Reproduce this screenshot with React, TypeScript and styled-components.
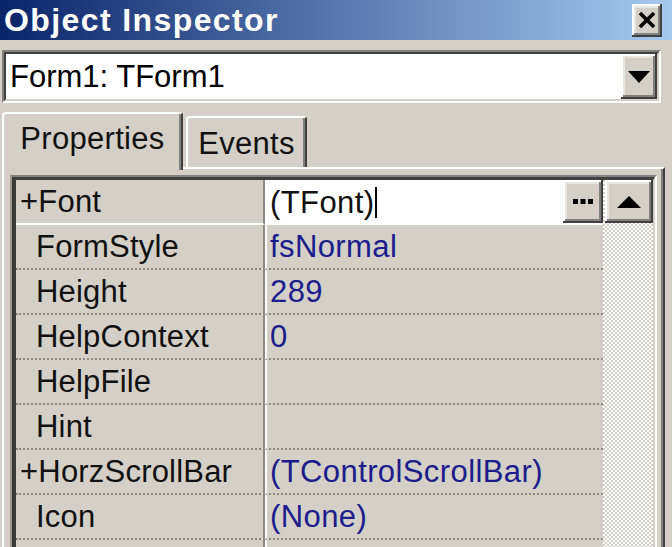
import React from "react";
import styled, { createGlobalStyle } from "styled-components";

const GlobalStyle = createGlobalStyle`
    html, body {
        margin: 0;
        padding: 0;
        background: #d4d0c8;
    }
    body {
        width: 672px;
        height: 547px;
        overflow: hidden;
        font-family: "Liberation Sans", Arial, sans-serif;
    }
`;

const Window = styled.div`
    width: 672px;
    height: 547px;
    display: flex;
    flex-direction: column;
    background: #d4d0c8;
    overflow: hidden;
`;

const TitleBar = styled.div`
    height: 40px;
    flex: none;
    display: flex;
    align-items: center;
    justify-content: space-between;
    padding: 0 10px 0 4px;
    background: linear-gradient(to right, #0a246a 0%, #a6caf0 100%);
`;

const Title = styled.div`
    color: #fff;
    font-weight: bold;
    font-size: 32px;
    letter-spacing: 1.4px;
    line-height: 40px;
`;

const RaisedButton = styled.div`
    background: #d4d0c8;
    display: flex;
    align-items: center;
    justify-content: center;
    box-sizing: border-box;
    box-shadow: inset -2px -2px 0 #404040, inset 2px 2px 0 #ffffff,
        inset -4px -4px 0 #808080, inset 4px 4px 0 #e8e6e0;
`;

const CloseButton = styled(RaisedButton)`
    width: 30px;
    height: 33px;
`;

const ComboOuter = styled.div`
    flex: none;
    height: 53px;
    margin: 10px 11px 0 2px;
    box-sizing: border-box;
    border-top: 2px solid #808080;
    border-left: 2px solid #808080;
    border-bottom: 2px solid #ffffff;
    border-right: 2px solid #ffffff;
    display: flex;
`;

const ComboInner = styled.div`
    flex: 1;
    display: flex;
    background: #fff;
    border-top: 2px solid #404040;
    border-left: 2px solid #404040;
    border-bottom: 2px solid #d4d0c8;
    border-right: 2px solid #d4d0c8;
`;

const ComboText = styled.div`
    flex: 1;
    display: flex;
    align-items: center;
    padding-left: 4px;
    font-size: 31px;
    color: #000;
`;

const DropButton = styled(RaisedButton)`
    width: 36px;
`;

const TabStrip = styled.div`
    flex: none;
    height: 55px;
    margin-top: 9px;
    padding-left: 2px;
    display: flex;
    align-items: flex-start;
    gap: 3px;
    position: relative;
    z-index: 1;
`;

const Tab = styled.div<{ $active?: boolean }>`
    box-sizing: border-box;
    width: ${(p) => (p.$active ? "181px" : "121px")};
    height: ${(p) => (p.$active ? "58px" : "51px")};
    margin-top: ${(p) => (p.$active ? "0" : "4px")};
    background: #d4d0c8;
    border-top: 2px solid #fff;
    border-left: 2px solid #fff;
    border-right: 2px solid #404040;
    border-top-left-radius: 4px;
    border-top-right-radius: 3px;
    box-shadow: inset -2px 0 0 #808080;
    display: flex;
    justify-content: center;
    padding-top: ${(p) => (p.$active ? "7px" : "8px")};
    font-size: 31px;
    letter-spacing: 0.3px;
    line-height: 36px;
    color: #111;
`;

const TabPage = styled.div`
    flex: 1;
    min-height: 0;
    margin: 0 7px 0 2px;
    border-top: 2px solid #fff;
    border-left: 2px solid #fff;
    border-right: 2px solid #404040;
    box-shadow: inset -2px 0 0 #808080;
    padding: 6px 6px 0 6px;
    display: flex;
`;

const GridFrame = styled.div`
    flex: 1;
    display: flex;
    border-top: 2px solid #808080;
    border-left: 2px solid #9a9890;
    border-right: 2px solid #fff;
`;

const GridInner = styled.div`
    flex: 1;
    display: flex;
    border-top: 3px solid #404040;
    border-left: 4px solid #3a3a3a;
    border-right: 2px solid #d4d0c8;
`;

const Rows = styled.div`
    flex: 1;
    display: flex;
    flex-direction: column;
`;

const Row = styled.div`
    flex: none;
    height: 45px;
    display: grid;
    grid-template-columns: 249px 1fr;
`;

const NameCell = styled.div<{ $expandable?: boolean; $selected?: boolean }>`
    display: flex;
    align-items: center;
    box-sizing: border-box;
    padding-left: ${(p) => (p.$expandable ? "4px" : "20px")};
    border-right: 2px solid #8c8a84;
    border-bottom: 2px ${(p) => (p.$selected ? "solid #fff" : "dotted #8a8880")};
    font-size: 31px;
    letter-spacing: 0.2px;
    color: #111;
    white-space: nowrap;
`;

const ValueCell = styled.div<{ $selected?: boolean }>`
    display: flex;
    align-items: center;
    box-sizing: border-box;
    border-left: 2px solid #fff;
    border-bottom: ${(p) => (p.$selected ? "none" : "2px dotted #8a8880")};
    background: ${(p) => (p.$selected ? "#fff" : "transparent")};
    font-size: 31px;
    letter-spacing: 0.4px;
    color: ${(p) => (p.$selected ? "#111" : "#1c1c8c")};
    white-space: nowrap;
    overflow: hidden;
`;

const ValueText = styled.div`
    flex: 1;
    padding-left: 3px;
    display: flex;
    align-items: center;
`;

const Caret = styled.span`
    display: inline-block;
    width: 2px;
    height: 31px;
    background: #000;
    margin-left: 1px;
`;

const EllipsisButton = styled(RaisedButton)`
    width: 40px;
    height: 43px;
    align-self: flex-start;
`;

const ScrollBar = styled.div`
    flex: none;
    width: 50px;
    display: flex;
    flex-direction: column;
    background: repeating-conic-gradient(#ffffff 0 25%, #d4d0c8 0 50%) 0 0 / 4px 4px;
`;

const ScrollButton = styled(RaisedButton)`
    height: 43px;
    margin-left: 2px;
`;

type Prop = { name: string; value: string; expandable?: boolean };

const props: Prop[] = [
    { name: "FormStyle", value: "fsNormal" },
    { name: "Height", value: "289" },
    { name: "HelpContext", value: "0" },
    { name: "HelpFile", value: "" },
    { name: "Hint", value: "" },
    { name: "+HorzScrollBar", value: "(TControlScrollBar)", expandable: true },
    { name: "Icon", value: "(None)" },
    { name: "", value: "" },
];

const App = () => {
    return (
        <Window>
            <GlobalStyle />
            <TitleBar>
                <Title>Object Inspector</Title>
                <CloseButton>
                    <svg width="18" height="16" viewBox="0 0 18 16">
                        <path d="M2 1 L16 15 M16 1 L2 15" stroke="#000" strokeWidth="3.6" />
                    </svg>
                </CloseButton>
            </TitleBar>

            <ComboOuter>
                <ComboInner>
                    <ComboText>Form1: TForm1</ComboText>
                    <DropButton>
                        <svg width="22" height="12" viewBox="0 0 22 12">
                            <path d="M0 0 H22 L11 12 Z" fill="#000" />
                        </svg>
                    </DropButton>
                </ComboInner>
            </ComboOuter>

            <TabStrip>
                <Tab $active>Properties</Tab>
                <Tab>Events</Tab>
            </TabStrip>

            <TabPage>
                <GridFrame>
                    <GridInner>
                        <Rows>
                            <Row>
                                <NameCell $expandable $selected>+Font</NameCell>
                                <ValueCell $selected>
                                    <ValueText>
                                        (TFont)<Caret />
                                    </ValueText>
                                    <EllipsisButton>
                                        <svg width="20" height="6" viewBox="0 0 20 6">
                                            <rect x="0" y="0" width="5" height="5" fill="#000" />
                                            <rect x="7.5" y="0" width="5" height="5" fill="#000" />
                                            <rect x="15" y="0" width="5" height="5" fill="#000" />
                                        </svg>
                                    </EllipsisButton>
                                </ValueCell>
                            </Row>
                            {props.map((p, i) => (
                                <Row key={i}>
                                    <NameCell $expandable={p.expandable}>{p.name}</NameCell>
                                    <ValueCell>
                                        <ValueText>{p.value}</ValueText>
                                    </ValueCell>
                                </Row>
                            ))}
                        </Rows>
                        <ScrollBar>
                            <ScrollButton>
                                <svg width="24" height="12" viewBox="0 0 24 12">
                                    <path d="M12 0 L24 12 H0 Z" fill="#000" />
                                </svg>
                            </ScrollButton>
                        </ScrollBar>
                    </GridInner>
                </GridFrame>
            </TabPage>
        </Window>
    );
};

export default App;
